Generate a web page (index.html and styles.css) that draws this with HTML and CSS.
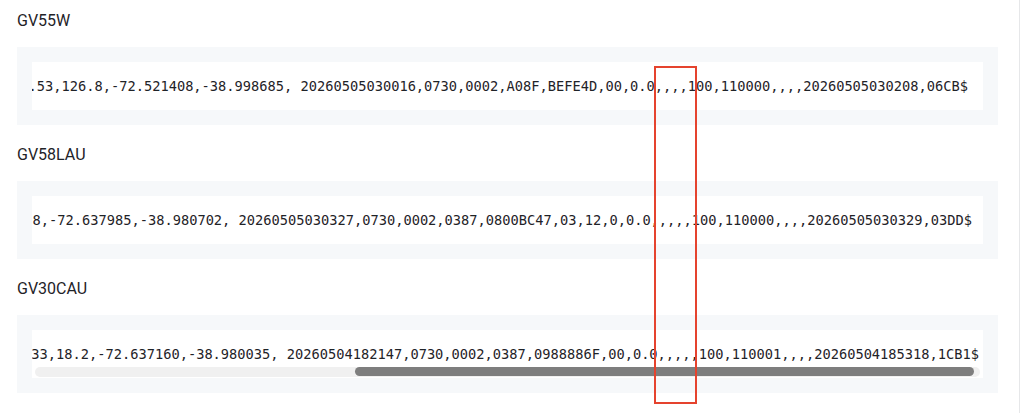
FILE: index.html
```html
<!DOCTYPE html>
<html lang="en">
<head>
<meta charset="utf-8">
<title>Raw frames</title>
<link rel="stylesheet" href="styles.css">
</head>
<body>
<main class="page">
  <section class="frame">
    <h3 class="frame-title">GV55W</h3>
    <div class="card">
      <div class="scroll scroll--a">
        <code class="line">+RESP:GTFRI,301201,862170013824219,GV55W,0,0,1,1,2.4,245,0.53,126.8,-72.521408,-38.998685, 20260505030016,0730,0002,A08F,BEFE4D,00,0.0,,,,100,110000,,,,20260505030208,06CB$</code>
      </div>
    </div>
  </section>
  <section class="frame">
    <h3 class="frame-title">GV58LAU</h3>
    <div class="card">
      <div class="scroll scroll--b">
        <code class="line">+RESP:GTFRI,301201,862170013824227,GV58LAU,0,0,1,1,0.0,0,95.8,-72.637985,-38.980702, 20260505030327,0730,0002,0387,0800BC47,03,12,0,0.0,,,,,100,110000,,,,20260505030329,03DD$</code>
      </div>
    </div>
  </section>
  <section class="frame">
    <h3 class="frame-title">GV30CAU</h3>
    <div class="card">
      <div class="scroll scroll--c">
        <code class="line">+RESP:GTFRI,301201,862170013824235,GV30CAU,0,0,1,1,0.0,0,233,18.2,-72.637160,-38.980035, 20260504182147,0730,0002,0387,0988886F,00,0.0,,,,,100,110001,,,,20260504185318,1CB1$</code>
        <div class="scrollbar"><div class="scrollbar-thumb"></div></div>
      </div>
    </div>
  </section>
  <div class="highlight" aria-hidden="true"></div>
</main>
</body>
</html>
```

FILE: styles.css
```css
* { box-sizing: border-box; }

html, body {
  margin: 0;
  padding: 0;
  background: #ffffff;
}

body {
  color: #1f2328;
  font-family: Roboto, "Liberation Sans", Arial, sans-serif;
}

.page {
  position: relative;
  width: 1020px;
  height: 413px;
  padding: 12px 21px 0 17px;
  border-right: 1px solid #e6e7e9;
  overflow: hidden;
}

.frame-title {
  margin: 0 0 17px;
  font-size: 16px;
  line-height: 18px;
  font-weight: 400;
  color: #1f2328;
}

.card {
  background: #f6f8fa;
  padding: 15px;
  margin-bottom: 21px;
}

.scroll {
  position: relative;
  display: flex;
  justify-content: flex-end;
  overflow: hidden;
  background: #ffffff;
  padding: 14px 15px;
}

.scroll--a { padding-right: 15px; }
.scroll--b { padding-right: 11px; }
.scroll--c { padding-right: 4px; }

.line {
  flex: none;
  display: block;
  white-space: pre;
  font-family: "DejaVu Sans Mono", "Liberation Mono", monospace;
  font-size: 13.7px;
  line-height: 20px;
  color: #1f2328;
}

.scrollbar {
  position: absolute;
  left: 3px;
  right: 3px;
  bottom: 1px;
  height: 10px;
  border-radius: 5px;
  background: #f0f0f0;
}

.scrollbar-thumb {
  position: absolute;
  top: 0;
  bottom: 1px;
  left: 33.9%;
  width: 65.5%;
  border-radius: 5px;
  background: #7e7e7e;
}

.highlight {
  position: absolute;
  left: 654px;
  top: 66px;
  width: 43px;
  height: 338px;
  border: 2px solid #e5432e;
  pointer-events: none;
}
```
